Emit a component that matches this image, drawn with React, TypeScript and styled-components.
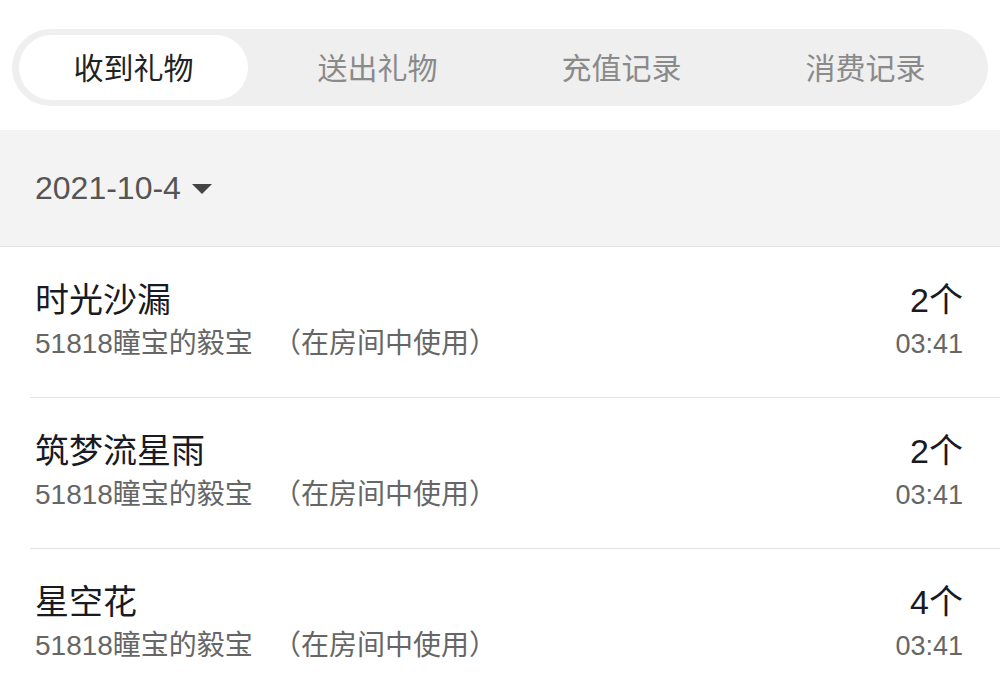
import React, { useState } from 'react'
import styled, { createGlobalStyle } from 'styled-components'

const GlobalStyle = createGlobalStyle`
  html, body {
    margin: 0;
    padding: 0;
    background: #fff;
  }
  body {
    font-family: 'Liberation Sans', 'Noto Sans CJK SC', sans-serif;
  }
`

const tabs = ['收到礼物', '送出礼物', '充值记录', '消费记录']

const gifts = [
  { name: '时光沙漏', from: '51818瞳宝的毅宝', note: '（在房间中使用）', count: 2, time: '03:41' },
  { name: '筑梦流星雨', from: '51818瞳宝的毅宝', note: '（在房间中使用）', count: 2, time: '03:41' },
  { name: '星空花', from: '51818瞳宝的毅宝', note: '（在房间中使用）', count: 4, time: '03:41' },
]

const App: React.FC = () => {
  const [active, setActive] = useState(0)

  return (
    <Page>
      <GlobalStyle />
      <TabBarWrap>
        <TabBar>
          {tabs.map((t, i) => (
            <Tab key={t} active={i === active} onClick={() => setActive(i)}>
              {t}
            </Tab>
          ))}
        </TabBar>
      </TabBarWrap>

      <DateBand>
        <DatePicker>
          2021-10-4
          <Caret />
        </DatePicker>
      </DateBand>

      <List>
        {gifts.map((g, i) => (
          <Item key={i}>
            <Left>
              <GiftName>{g.name}</GiftName>
              <Meta>
                {g.from}
                <Note>{g.note}</Note>
              </Meta>
            </Left>
            <Right>
              <Count>{g.count}个</Count>
              <Time>{g.time}</Time>
            </Right>
          </Item>
        ))}
      </List>
    </Page>
  )
}

export default App

const Page = styled.div`
  width: 1000px;
  height: 696px;
  overflow: hidden;
  background: #fff;
`

const TabBarWrap = styled.div`
  padding: 29px 12px 24px;
`

const TabBar = styled.div`
  display: grid;
  grid-template-columns: repeat(4, 1fr);
  height: 77px;
  padding: 6px 0;
  box-sizing: border-box;
  background: #efefef;
  border-radius: 39px;
`

const Tab = styled.div<{ active: boolean }>`
  display: flex;
  align-items: center;
  justify-content: center;
  margin: 0 8px 0 7px;
  padding-bottom: 3px;
  border-radius: 33px;
  font-size: 30px;
  cursor: pointer;
  color: ${p => (p.active ? '#222' : '#8a8a8a')};
  background: ${p => (p.active ? '#fff' : 'transparent')};
`

const DateBand = styled.div`
  height: 116px;
  display: flex;
  align-items: center;
  padding: 0 35px;
  background: #f3f3f3;
  border-bottom: 1px solid #e2e2e2;
`

const DatePicker = styled.div`
  display: flex;
  align-items: center;
  font-size: 32px;
  color: #555;
  line-height: 1;
`

const Caret = styled.span`
  display: inline-block;
  width: 0;
  height: 0;
  margin-left: 11px;
  margin-top: 2px;
  border-left: 10px solid transparent;
  border-right: 10px solid transparent;
  border-top: 10px solid #444;
`

const List = styled.div`
  display: flex;
  flex-direction: column;
`

const Item = styled.div`
  display: flex;
  justify-content: space-between;
  align-items: flex-start;
  margin-left: 30px;
  padding: 31px 37px 31px 5px;
  border-bottom: 1px solid #e3e3e3;
`

const Left = styled.div`
  display: flex;
  flex-direction: column;
`

const Right = styled.div`
  display: flex;
  flex-direction: column;
  align-items: flex-end;
`

const GiftName = styled.div`
  font-size: 34px;
  line-height: 44px;
  color: #181a24;
`

const Meta = styled.div`
  font-size: 28px;
  line-height: 44px;
  color: #666;
`

const Note = styled.span`
  margin-left: 20px;
`

const Count = styled.div`
  font-size: 34px;
  line-height: 44px;
  color: #181a24;
`

const Time = styled.div`
  font-size: 27px;
  line-height: 44px;
  color: #666;
`
